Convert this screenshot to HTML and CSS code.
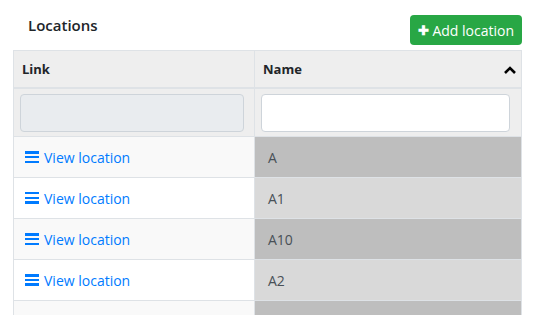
FILE: index.html
```html
<!DOCTYPE html>
<html lang="en">
<head>
  <meta charset="UTF-8">
  <title>Locations</title>
  <link rel="stylesheet" href="styles.css">
</head>
<body>
<div class="page">
  <div class="top">
    <h4 class="title">Locations</h4>
    <a class="btn-add"><span class="plus">&#10010;</span>Add location</a>
  </div>
  <table class="grid">
    <thead>
      <tr class="head">
        <th class="col-link">Link</th>
        <th class="col-name">Name <svg class="caret" viewBox="0 0 12 8" width="12" height="8"><path d="M1 7 L6 2 L11 7" fill="none" stroke="#000" stroke-width="2.6"/></svg></th>
      </tr>
      <tr class="filters">
        <th class="f-link"><input class="filter" disabled></th>
        <th class="f-name"><input class="filter"></th>
      </tr>
    </thead>
    <tbody>
      <tr class="odd"><td><a class="view"><span class="bars"></span>View location</a></td><td class="name">A</td></tr>
      <tr class="even"><td><a class="view"><span class="bars"></span>View location</a></td><td class="name">A1</td></tr>
      <tr class="odd"><td><a class="view"><span class="bars"></span>View location</a></td><td class="name">A10</td></tr>
      <tr class="even"><td><a class="view"><span class="bars"></span>View location</a></td><td class="name">A2</td></tr>
      <tr class="odd last"><td></td><td class="name"></td></tr>
    </tbody>
  </table>
</div>
</body>
</html>
```
FILE: styles.css
```css
html,body{
  margin: 0;
  background: #fff;
  font-family: "Open Sans", sans-serif;
  color: #212529;
}
.page{
  padding: 15px 14px 0 13px;
}
.top{
  display: flex;
  justify-content: space-between;
  align-items: flex-start;
  height: 35px;
}
.title{
  margin: 0;
  padding: 0 0 0 15px;
  font-size: 15px;
  font-weight: 600;
  line-height: 20px;
}
.btn-add{
  display: flex;
  align-items: center;
  gap: 3px;
  height: 30px;
  padding: 0 8px 0 8px;
  box-sizing: border-box;
  background: #28a745;
  border-radius: 4px;
  color: #fff;
  font-size: 14px;
}
.plus{
  font-size: 13px;
  font-weight: 700;
}
.grid{
  width: 509px;
  border-collapse: collapse;
  border: 1px solid #dee2e6;
  font-size: 14px;
}
.grid th, .grid td{
  border: 1px solid #dee2e6;
  padding: 0 8px;
  text-align: left;
}
.head th{
  height: 36px;
  background: #eee;
  font-size: 13px;
  font-weight: 700;
  border-bottom-width: 2px;
}
.col-link{ width: 224px; }
.col-name{ position: relative; padding-left: 9px; }
.caret{
  position: absolute;
  right: 5px;
  top: 15px;
}
.filters th{
  height: 47px;
  background: #eee;
}
.filters .f-link{ padding: 0 10px 0 6px; }
.filters .f-name{ padding: 0 11px 0 6px; }
.filter{
  display: block;
  width: 100%;
  height: 38px;
  box-sizing: border-box;
  border: 1px solid #ced4da;
  border-radius: 4px;
  background: #fff;
}
.filter:disabled{ background: #e9ecef; }
tbody td{ height: 40px; }
.odd td{ background: #f9f9f9; }
.even td{ background: #fff; }
.odd td.name{ background: #bebebe; }
.even td.name{ background: #d9d9d9; }
.name{ color: #495057; padding-left: 13px !important; }
.view{
  display: flex;
  align-items: center;
  gap: 5px;
  color: #007bff;
  padding-left: 3px;
}
.bars{
  width: 14px;
  height: 12px;
  background: linear-gradient(#007bff 0 2.5px, transparent 2.5px 4.75px, #007bff 4.75px 7.25px, transparent 7.25px 9.5px, #007bff 9.5px);
}
```
